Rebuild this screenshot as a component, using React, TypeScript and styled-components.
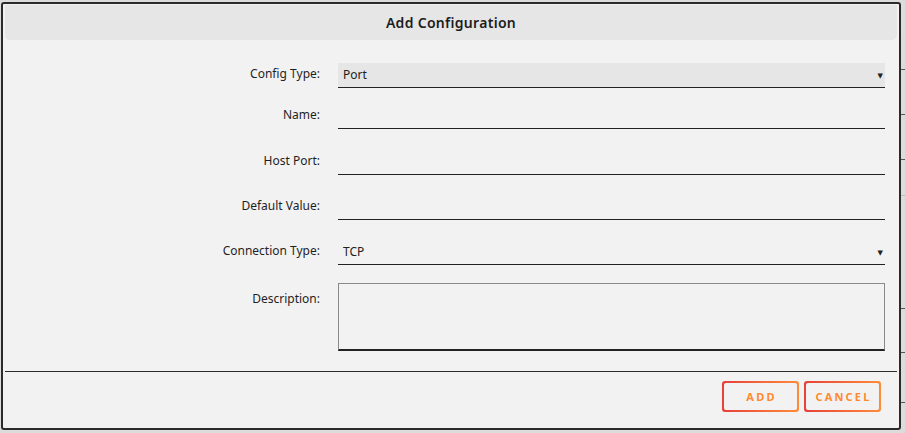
import React from "react";
import styled, { createGlobalStyle } from "styled-components";

const Global = createGlobalStyle`
  html, body { margin: 0; padding: 0; background: #dcdcdc; }
  body { font-family: "Noto Sans", "DejaVu Sans", sans-serif; }
  * { box-sizing: border-box; }
`;

const Page = styled.div`
  position: relative;
  width: 905px;
  height: 433px;
  overflow: hidden;
  background: #dcdcdc;
`;

const Backdrop = styled.div`
  display: flex;
  flex-direction: column;
  width: 100%;
  padding-left: 880px;
`;

const BackRow = styled.div<{ $h: number; $light?: boolean }>`
  height: ${(p) => p.$h}px;
  border-bottom: 1px solid ${(p) => (p.$light ? "#bdbdbd" : "#555")};
`;

const Dialog = styled.div`
  position: absolute;
  left: 1px;
  top: 2px;
  width: 900px;
  height: 428px;
  background: #f2f2f2;
  border: 2px solid #2b2b2b;
  border-radius: 3px;
  display: flex;
  flex-direction: column;
  padding: 1px 2px 0 2px;
`;

const Header = styled.div`
  height: 35px;
  background: #e6e6e6;
  border-radius: 0 0 5px 5px;
  display: flex;
  align-items: center;
  justify-content: center;
  font-size: 14px;
  font-weight: 600;
  color: #1d1d1d;
  letter-spacing: 0.3px;
`;

const Form = styled.div`
  display: flex;
  flex-direction: column;
  padding-top: 23px;
  padding-right: 12px;
`;

const Row = styled.div<{ $gap: number; $top?: boolean }>`
  display: flex;
  align-items: ${(p) => (p.$top ? "flex-start" : "center")};
  margin-bottom: ${(p) => p.$gap}px;
`;

const Label = styled.div<{ $pt?: number }>`
  width: 315px;
  text-align: right;
  font-size: 12px;
  color: #1f1f1f;
  padding-bottom: 4px;
  padding-top: ${(p) => p.$pt ?? 0}px;
`;

const Field = styled.div<{ $filled?: boolean }>`
  margin-left: 18px;
  flex: 1;
  height: 25px;
  border-bottom: 1px solid #222;
  background: ${(p) => (p.$filled ? "#e6e6e6" : "transparent")};
  display: flex;
  align-items: center;
  justify-content: space-between;
  padding: 0 2px 2px 5px;
  font-size: 12px;
  color: #222;
`;

const Caret = styled.span`
  font-size: 7px;
  color: #222;
  margin-top: 2px;
`;

const TextArea = styled.div`
  margin-left: 18px;
  flex: 1;
  height: 68px;
  border: 1px solid #8a8a8a;
  border-bottom: 2px solid #222;
`;

const Divider = styled.div`
  margin-top: 20px;
  height: 1px;
  background: #2b2b2b;
`;

const Footer = styled.div`
  display: flex;
  justify-content: flex-end;
  gap: 5px;
  padding: 9px 16px 0 0;
`;

const Button = styled.div`
  width: 77px;
  height: 31px;
  border-radius: 3px;
  padding: 2px;
  background: linear-gradient(90deg, #e8403a, #ff8c3a);
`;

const ButtonInner = styled.div`
  width: 100%;
  height: 100%;
  border-radius: 2px;
  background: #f2f2f2;
  display: flex;
  align-items: center;
  justify-content: center;
  font-size: 11px;
  font-weight: 700;
  letter-spacing: 2.2px;
  color: #ff8a2e;
  padding-left: 2px;
`;

const backRows = [
  { h: 70 },
  { h: 45 },
  { h: 45 },
  { h: 36, light: true },
  { h: 113 },
  { h: 44 },
  { h: 50 },
];

export default function App() {
  return (
    <Page>
      <Global />
      <Backdrop>
        {backRows.map((r, i) => (
          <BackRow key={i} $h={r.h} $light={r.light} />
        ))}
      </Backdrop>
      <Dialog>
        <Header>Add Configuration</Header>
        <Form>
          <Row $gap={16}>
            <Label>Config Type:</Label>
            <Field $filled>
              <span>Port</span>
              <Caret>▼</Caret>
            </Field>
          </Row>
          <Row $gap={21}>
            <Label>Name:</Label>
            <Field />
          </Row>
          <Row $gap={20}>
            <Label>Host Port:</Label>
            <Field />
          </Row>
          <Row $gap={20}>
            <Label>Default Value:</Label>
            <Field />
          </Row>
          <Row $gap={18}>
            <Label>Connection Type:</Label>
            <Field>
              <span>TCP</span>
              <Caret>▼</Caret>
            </Field>
          </Row>
          <Row $gap={0} $top>
            <Label $pt={7}>Description:</Label>
            <TextArea />
          </Row>
        </Form>
        <Divider />
        <Footer>
          <Button>
            <ButtonInner>ADD</ButtonInner>
          </Button>
          <Button>
            <ButtonInner>CANCEL</ButtonInner>
          </Button>
        </Footer>
      </Dialog>
    </Page>
  );
}
